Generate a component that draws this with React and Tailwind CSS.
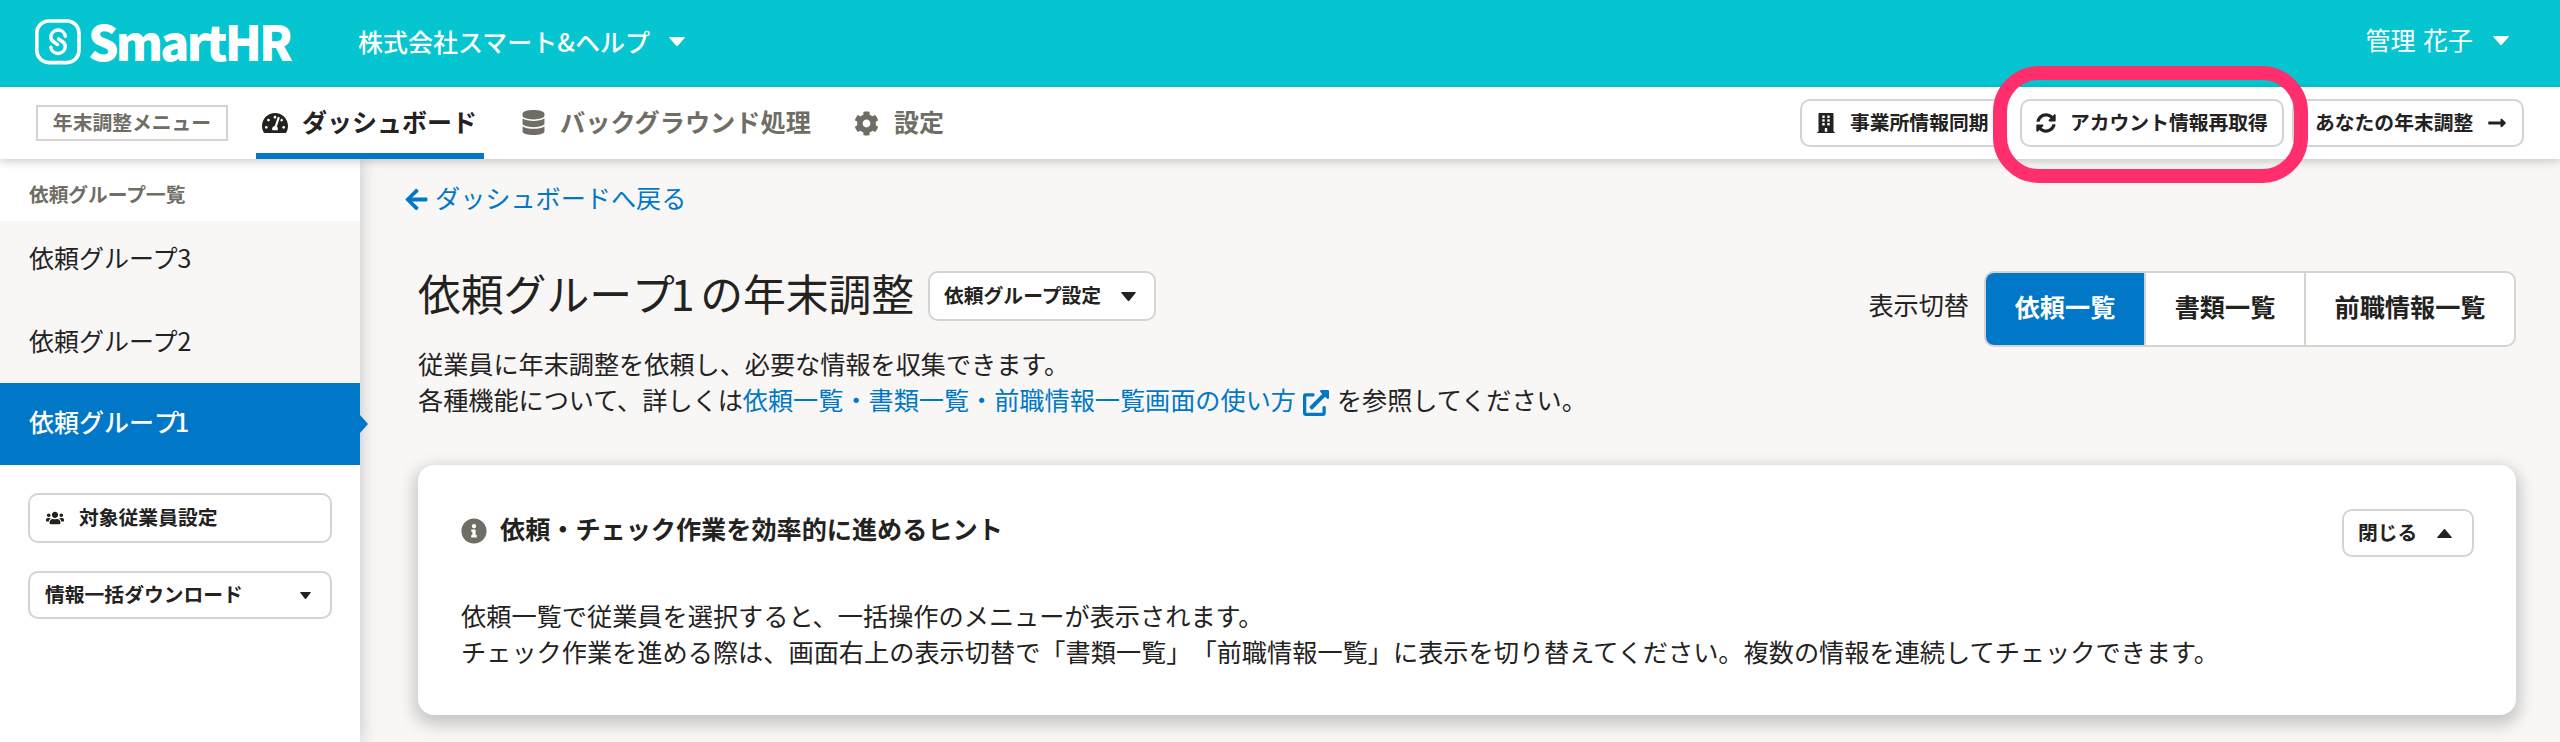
import {
  FaTachometerAlt, FaDatabase, FaCog, FaBuilding, FaSyncAlt, FaUsers,
  FaArrowLeft, FaExternalLinkAlt, FaInfoCircle, FaLongArrowAltRight,
} from 'react-icons/fa';

function Caret({ className, up }) {
  return (
    <svg viewBox="0 0 16 12" className={className} fill="currentColor" preserveAspectRatio="none">
      <path d={up ? 'M1 12h14a.8.8 0 0 0 .6-1.300L8.800.5a1 1 0 0 0-1.600 0L.4 10.700A.8.8 0 0 0 1 12z' : 'M1 0h14a.8.8 0 0 1 .6 1.300L8.800 11.500a1 1 0 0 1-1.600 0L.4 1.300A.8.8 0 0 1 1 0z'} />
    </svg>
  );
}

// Label whose glyphs sit optically centred on the row
function T({ children }) {
  return <span className="block pb-[3px] whitespace-nowrap">{children}</span>;
}

function Logo() {
  return (
    <div className="flex w-[257px] items-center">
      <svg viewBox="0 0 46 46" className="h-[46px] w-[46px] shrink-0" fill="none" stroke="#fff">
        <rect x="1.800" y="2" width="42.200" height="41.600" rx="12" strokeWidth="3.600" />
        <path d="M30.300 17.300a7.300 7.300 0 0 0-14.500.6c0 2.300 1 3.700 2.700 4.900l4 2.700" strokeWidth="3.500" strokeLinecap="round" />
        <path d="M15.800 28.200a7.300 7.300 0 0 0 14.500-.6c0-2.300-1-3.700-2.700-4.900l-4-2.700" strokeWidth="3.500" strokeLinecap="round" />
      </svg>
      <span className="mb-[4px] ml-[7px] text-[48px] leading-[60px] font-black tracking-[-2.800px]">SmartHR</span>
    </div>
  );
}

const btn = 'flex items-center rounded-[10px] border-2 border-[#d6d3d0] bg-white font-bold whitespace-nowrap text-[19.800px]';

function Header() {
  return (
    <header className="flex h-[87px] items-center bg-[#04c5d0] pb-[4px] pl-[35px] pr-[51px] text-white">
      <Logo />
      <span className="ml-[66px] text-[25px] font-medium">株式会社スマート&amp;ヘルプ</span>
      <Caret className="ml-[19px] h-[9px] w-[16px]" />
      <span className="ml-auto text-[25px] [word-spacing:2px]"><T>管理 花子</T></span>
      <Caret className="mb-[2px] ml-[20px] h-[9px] w-[16px]" />
    </header>
  );
}

function Nav() {
  return (
    <nav className="relative z-10 flex h-[72px] items-center bg-white pl-[36px] pr-[36px] text-[#706d65] shadow-[0_3px_8px_rgba(0,0,0,0.18)]">
      <div className="flex h-[36px] w-[192px] items-center justify-center border-2 border-[#d6d3d0] text-[19.800px] font-bold"><T>年末調整メニュー</T></div>
      <div className="ml-[28px] flex h-full w-[228px] items-center border-b-[6px] border-[#0077c7] pt-[6px] pl-[6px] text-[25px] font-bold text-[#23221e]">
        <FaTachometerAlt className="mr-[14px] h-[26px] w-[26px]" /><T>ダッシュボード</T>
      </div>
      <div className="ml-[37px] flex items-center text-[25.200px] font-bold">
        <FaDatabase className="mr-[14px] h-[25px] w-[25px]" /><T>バックグラウンド処理</T>
      </div>
      <div className="ml-[43px] flex items-center text-[25px] font-bold">
        <FaCog className="mr-[15px] h-[25px] w-[25px]" /><T>設定</T>
      </div>
      <div className="ml-auto flex text-[#23221e]">
        <div className={`${btn} h-[48px] w-[204px] pl-[14px]`}><FaBuilding className="mr-[14px] h-[20px] w-[20px]" /><T>事業所情報同期</T></div>
        <div className={`${btn} ml-[16px] h-[48px] w-[264px] pl-[14px]`}><FaSyncAlt className="mr-[14px] h-[20px] w-[20px]" /><T>アカウント情報再取得</T></div>
        <div className={`${btn} ml-[8px] h-[48px] w-[232px] pl-[21px]`}><T>あなたの年末調整</T><FaLongArrowAltRight className="ml-[14px] h-[20px] w-[20px]" /></div>
      </div>
      <div className="absolute top-[-21px] left-[1993px] h-[117px] w-[315px] rounded-[46px] border-[14px] border-[#ff2f6e]" />
    </nav>
  );
}

function Sidebar() {
  return (
    <aside className="relative w-[360px] shrink-0 bg-white shadow-[2px_0_16px_rgba(0,0,0,0.18)]">
      <div className="flex h-[62px] items-center pl-[29px] pt-[8px] text-[19.700px] font-bold text-[#706d65]">依頼グループ一覧</div>
      <div className="bg-[#f8f7f6] text-[25px]">
        <div className="flex h-[81px] items-center pl-[29px] pb-[7px]">依頼グループ3</div>
        <div className="flex h-[81px] items-center pl-[29px] pb-[4px]">依頼グループ2</div>
        <div className="relative flex h-[82px] items-center bg-[#0077c7] pb-[4px] pl-[29px] font-medium text-white">
          依頼グルー<span className="tracking-[-4px]">プ</span>1
          <div className="absolute top-[32px] right-[-8px] h-[18px] w-[8px] bg-[#0077c7] [clip-path:polygon(0_0,100%_50%,0_100%)]" />
        </div>
      </div>
      <div className={`${btn} mt-[28px] ml-[28px] h-[50px] w-[304px] pl-[16px]`}><FaUsers className="mr-[15px] h-[18px] w-[18px]" /><T>対象従業員設定</T></div>
      <div className={`${btn} mt-[28px] ml-[28px] h-[48px] w-[304px] justify-between pl-[15px] pr-[19px]`}><T>情報一括ダウンロード</T><Caret className="h-[7px] w-[11px]" /></div>
    </aside>
  );
}

function Main() {
  return (
    <main className="flex-1 pl-[58px] pr-[44px] text-[25.150px]">
      <div className="-ml-[14px] flex h-[80px] items-center text-[#0077c7]"><FaArrowLeft className="mr-[6px] h-[25px] w-[25px]" /><T>ダッシュボードへ戻る</T></div>
      <div className="mt-[32px] flex h-[76px] items-start">
        <h1 className="w-[496px] text-[42.800px] leading-[43px] whitespace-nowrap">依頼グルー<span className="tracking-[-4px]">プ1</span> の年末調整</h1>
        <div className={`${btn} ml-[14px] h-[50px] w-[228px] pl-[14px]`}><T>依頼グループ設定</T><Caret className="ml-[20px] h-[9px] w-[15px]" /></div>
        <span className="ml-auto mt-[14px] leading-[38px]">表示切替</span>
        <div className="ml-[15px] flex h-[76px] w-[532px] overflow-hidden rounded-[10px] border-2 border-[#d6d3d0] bg-white font-bold">
          <div className="flex w-[158px] items-center justify-center bg-[#0077c7] pb-[1px] text-white"><T>依頼一覧</T></div>
          <div className="flex w-[160px] items-center justify-center border-l-2 border-[#d6d3d0] pb-[1px]"><T>書類一覧</T></div>
          <div className="flex flex-1 items-center justify-center border-l-2 border-[#d6d3d0] pb-[1px]"><T>前職情報一覧</T></div>
        </div>
      </div>
      <div className="-mt-[2px] h-[120px] leading-[36px]">
        <p>従業員に年末調整を依頼し、必要な情報を収集できます。</p>
        <p className="flex items-center">各種機能について、詳しくは<span className="text-[#0077c7]">依頼一覧・書類一覧・前職情報一覧画面の使い方</span><FaExternalLinkAlt className="mr-[8px] ml-[7px] mt-[7px] h-[26px] w-[26px] text-[#0077c7]" />を参照してください。</p>
      </div>
      <section className="h-[250px] rounded-[16px] bg-white pl-[43px] pr-[42px] pt-[44px] shadow-[0_6px_16px_4px_rgba(0,0,0,0.2)]">
        <div className="flex items-start justify-between">
          <h2 className="flex h-[43px] items-center font-bold"><FaInfoCircle className="mr-[13px] h-[26px] w-[26px] text-[#706d65]" /><T>依頼・チェック作業を効率的に進めるヒント</T></h2>
          <div className={`${btn} h-[48px] w-[132px] pl-[14px]`}><T>閉じる</T><Caret up className="ml-[20px] h-[9px] w-[15px]" /></div>
        </div>
        <p className="mt-[40px] text-[25.200px] leading-[36px] [text-spacing-trim:space-all]">依頼一覧で従業員を選択すると、一括操作のメニューが表示されます。<br />チェック作業を進める際は、画面右上の表示切替で「書類一覧」「前職情報一覧」に表示を切り替えてください。複数の情報を連続してチェックできます。</p>
      </section>
    </main>
  );
}

export default function App() {
  return (
    <div lang="ja" className="h-[742px] w-[2560px] overflow-hidden bg-[#f8f7f6] font-['Noto_Sans_CJK_JP',sans-serif] text-[#23221e]">
      <Header />
      <Nav />
      <div className="flex h-[583px]">
        <Sidebar />
        <Main />
      </div>
    </div>
  );
}
